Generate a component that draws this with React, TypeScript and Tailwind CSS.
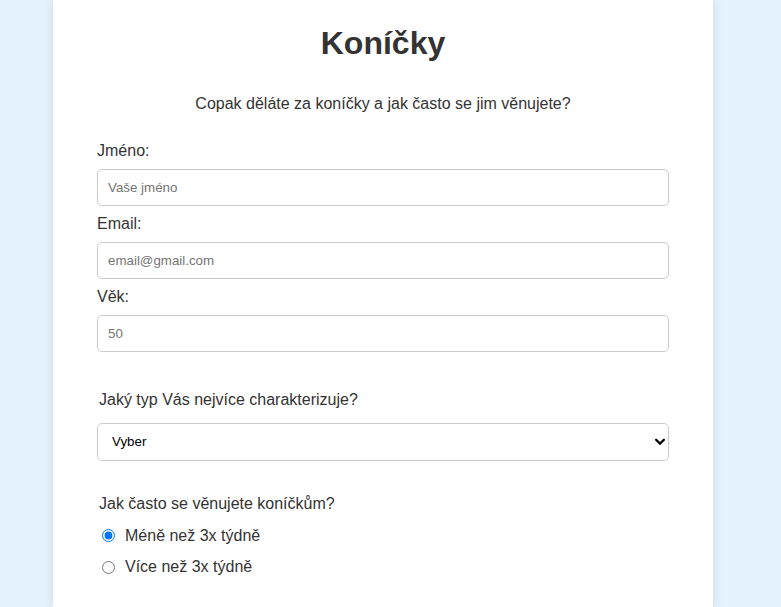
import { useState } from "react";

const labelClass = "block text-[16px] leading-[18.5px] text-[#333]";
const inputClass =
  "block h-[37px] w-full rounded-[5px] border border-[#ccc] bg-white px-[10px] text-[13.33px] text-black outline-none placeholder:text-[#757575]";

type FieldProps = {
  id: string;
  label: string;
  type?: string;
  placeholder: string;
  first?: boolean;
};

function Field({ id, label, type = "text", placeholder, first }: FieldProps) {
  return (
    <div className={first ? "mt-[28.5px]" : "mt-[9.5px]"}>
      <label className={labelClass} htmlFor={id}>
        {label}
      </label>
      <input
        className={`${inputClass} mt-[8px]`}
        id={id}
        name={id}
        type={type}
        placeholder={placeholder}
      />
    </div>
  );
}

export default function App() {
  const [frequency, setFrequency] = useState("less");

  return (
    <div
      className="min-h-screen bg-[#e3f2fd]"
      style={{ fontFamily: '"Liberation Sans", Arial, sans-serif' }}
    >
      <div className="ml-[53px] min-h-screen w-[660px] bg-white px-[44px] pb-[30px] pt-[25px] shadow-[0_0_10px_rgba(0,0,0,0.1)]">
        <h1 className="text-center text-[32px] font-bold leading-[37px] text-[#333]">
          Koníčky
        </h1>
        <p className="mt-[33px] text-center text-[16px] leading-[18.5px] text-[#333]">
          Copak děláte za koníčky a jak často se jim věnujete?
        </p>

        <form>
          <Field id="jmeno" label="Jméno:" placeholder="Vaše jméno" first />
          <Field id="email" label="Email:" type="email" placeholder="email@gmail.com" />
          <Field id="vek" label="Věk:" type="number" placeholder="50" />

          <label className={`${labelClass} mt-[39.5px] pl-[2px]`} htmlFor="typ">
            Jaký typ Vás nejvíce charakterizuje?
          </label>
          <div className="relative mt-[13.5px]">
            <select
              className="block h-[38px] w-full appearance-none rounded-[5px] border border-[#ccc] bg-white pl-[14px] pr-[24px] text-[13.33px] text-black outline-none"
              id="typ"
              name="typ"
              defaultValue=""
            >
              <option value="">Vyber</option>
              <option value="sport">Sportovní</option>
              <option value="kreativni">Kreativní</option>
              <option value="intelektual">Intelektuál</option>
            </select>
            <svg
              className="pointer-events-none absolute right-[4.5px] top-1/2 -translate-y-1/2"
              width="10"
              height="7"
              viewBox="0 0 10 7"
              fill="none"
            >
              <path
                d="M1.2 1.3 L5 5.1 L8.8 1.3"
                stroke="#000"
                strokeWidth="2.2"
                strokeLinecap="square"
              />
            </svg>
          </div>

          <p className={`${labelClass} mt-[34px] pl-[2px]`}>
            Jak často se věnujete koníčkům?
          </p>
          {[
            { value: "less", text: "Méně než 3x týdně" },
            { value: "more", text: "Více než 3x týdně" },
          ].map((option) => (
            <label
              key={option.value}
              className="mt-[13px] flex items-center text-[16px] leading-[18.5px] text-[#333]"
            >
              <input
                className="m-0 ml-[5px] mr-[10px] h-[13px] w-[13px]"
                type="radio"
                name="frekvence"
                value={option.value}
                checked={frequency === option.value}
                onChange={() => setFrequency(option.value)}
              />
              {option.text}
            </label>
          ))}
        </form>
      </div>
    </div>
  );
}
